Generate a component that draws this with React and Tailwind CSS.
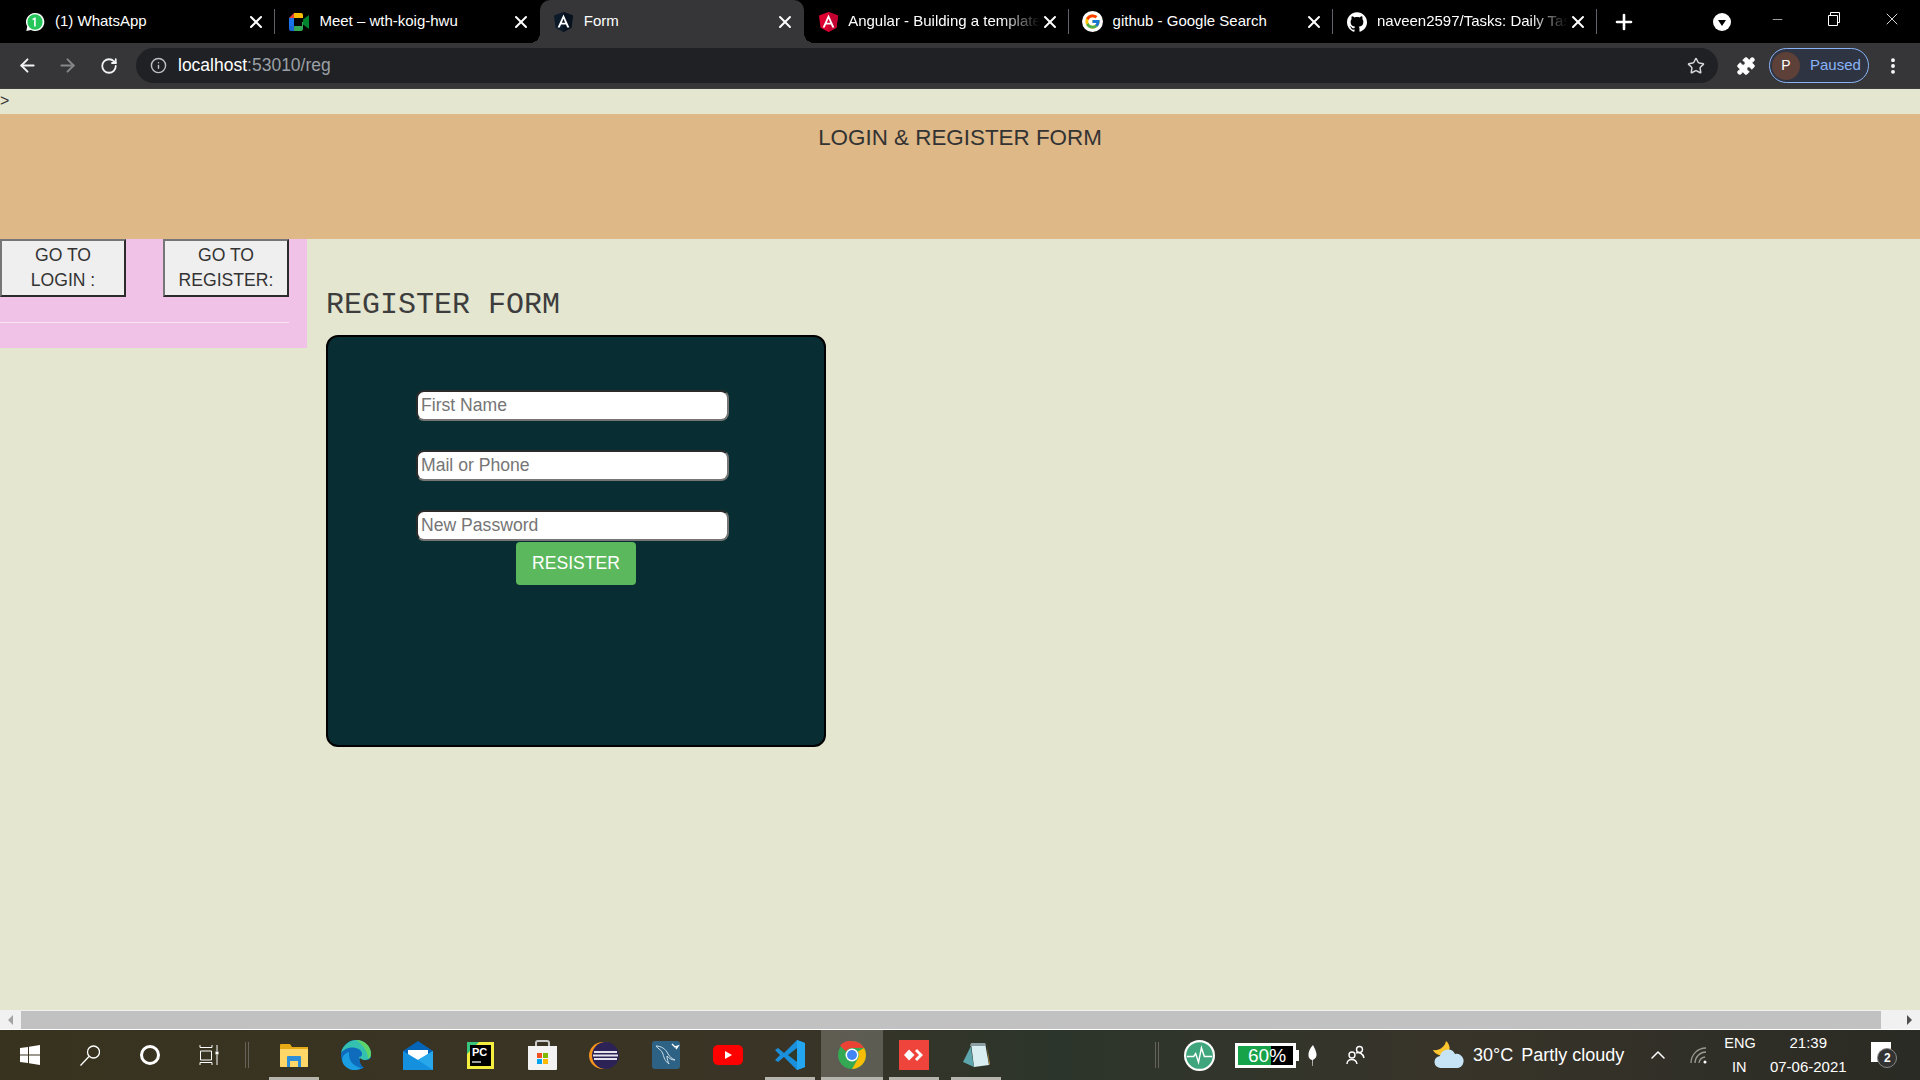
import React from "react";
import { ArrowLeft, ArrowRight, RotateCw, Info, Star, EllipsisVertical, X, Plus, Minus, ChevronUp, Puzzle } from "lucide-react";
import { SiGithub } from "react-icons/si";
import { FcGoogle } from "react-icons/fc";

const WhatsappIcon = () => (
  <svg width="22" height="22" viewBox="0 0 22 22">
    <path d="M11 1a10 10 0 0 0-8.600 15L1.500 21l5-1.200A10 10 0 1 0 11 1z" fill="#fff" />
    <circle cx="11" cy="11" r="8.400" fill="#25c65a" />
    <path d="M11.800 6v10h-1.800V8.200L8.300 9V7.400L10.700 6z" fill="#fff" />
  </svg>
);

const MeetIcon = () => (
  <svg width="20" height="18" viewBox="0 0 20 18">
    <path d="M5 0v5H0z" fill="#ea4335" />
    <path d="M5 0h7a2 2 0 0 1 2 2v3H5z" fill="#fbbc04" />
    <path d="M0 5h5v8H0z" fill="#1a73e8" />
    <path d="M0 13h5v5H2a2 2 0 0 1-2-2z" fill="#1967d2" />
    <path d="M5 13h9v3a2 2 0 0 1-2 2H5z" fill="#34a853" />
    <path d="M14 9v5l-1 0V9z" fill="#34a853" />
    <path d="M14 6.500v5l6 4.500V2z" fill="#00832d" />
  </svg>
);

const AngularIcon = ({ bg, shade, fg }) => (
  <svg width="19" height="20" viewBox="0 0 19 20">
    <path d="M9.500 0 0 3.400l1.500 12.400L9.500 20l8-4.200L19 3.400z" fill={bg} />
    <path d="M9.500 0v20l8-4.200L19 3.400z" fill={shade} />
    <path d="M9.500 2.400 3.600 15.600h2.200l1.200-3h5l1.200 3h2.200zm-1.700 8.400 1.700-4.100 1.700 4.100z" fill={fg} />
  </svg>
);

const tabs = [
  { title: "(1) WhatsApp", icon: <WhatsappIcon /> },
  { title: "Meet – wth-koig-hwu", icon: <MeetIcon /> },
  { title: "Form", icon: <AngularIcon bg="#0c1a2a" shade="#08121e" fg="#fff" />, active: true },
  { title: "Angular - Building a template", icon: <AngularIcon bg="#dd0031" shade="#c3002f" fg="#fff" />, fade: true },
  { title: "github - Google Search", icon: <span className="flex h-[21px] w-[21px] shrink-0 items-center justify-center rounded-full bg-white"><FcGoogle size={17} /></span> },
  { title: "naveen2597/Tasks: Daily Tasks", icon: <SiGithub size={20} color="#fff" />, fade: true },
];

const BrowserTab = ({ tab, hideSep }) => (
  <div className={`relative flex h-[43px] w-[264.4px] shrink-0 items-center pl-[14px] pr-[9px] ${tab.active ? "rounded-t-[10px] bg-[#363638]" : ""}`}>
    {tab.active && (
      <>
        <span className="absolute bottom-0 left-[-10px] h-[10px] w-[10px] bg-[radial-gradient(circle_at_0_0,transparent_10px,#363638_10px)]" />
        <span className="absolute bottom-0 right-[-10px] h-[10px] w-[10px] bg-[radial-gradient(circle_at_100%_0,transparent_10px,#363638_10px)]" />
      </>
    )}
    <span className="flex w-[20px] shrink-0 items-center justify-center">{tab.icon}</span>
    <span className={`ml-[10px] min-w-0 flex-1 overflow-hidden whitespace-nowrap text-[15px] text-white ${tab.fade ? "[mask-image:linear-gradient(to_right,black_80%,transparent)]" : ""}`}>
      {tab.title}
    </span>
    <X size={20} strokeWidth={2.4} className="shrink-0 text-white" />
    {!tab.active && !hideSep && <span className="absolute right-0 top-[9px] h-[25px] w-px bg-[#5f6368]" />}
  </div>
);

const TitleBar = () => (
  <div className="flex h-[43px] shrink-0 items-center bg-black pl-[11px]">
    {tabs.map((tab, i) => (
      <BrowserTab key={i} tab={tab} hideSep={i === 1} />
    ))}
    <Plus size={24} strokeWidth={2.6} className="ml-[15px] text-white" />
    <span className="ml-[77px] flex h-[18px] w-[18px] items-center justify-center rounded-full bg-white">
      <span className="mt-[3px] border-x-[4px] border-t-[6px] border-x-transparent border-t-black" />
    </span>
    <Minus size={15} strokeWidth={1} className="ml-[39px] -mt-[5px] text-white" />
    <svg width="14" height="14" viewBox="0 0 14 14" fill="none" stroke="#fff" className="ml-[42px] -mt-[5px]">
      <path d="M1.500 3.500h9v10h-9zM3.500 3.500v-3h9v10h-2" />
    </svg>
    <X size={20} strokeWidth={1} className="ml-[41px] -mt-[5px] text-white" />
  </div>
);

const Toolbar = () => (
  <div className="flex h-[46px] shrink-0 items-center border-b border-[#3c3d41] bg-[#363638]">
    <ArrowLeft size={21} strokeWidth={2.2} className="ml-[17px] text-[#f1f3f4]" />
    <ArrowRight size={21} strokeWidth={2.2} className="ml-[19px] text-[#85878a]" />
    <RotateCw size={18} strokeWidth={2.4} className="ml-[22px] text-[#f1f3f4]" />
    <div className="ml-[18px] flex h-[35px] w-[1582px] items-center rounded-full bg-[#202124] pl-[14px]">
      <Info size={17} className="text-[#bdc1c6]" />
      <span className="ml-[11px] text-[17.5px] text-white">localhost<span className="text-[#9aa0a6]">:53010/reg</span></span>
      <Star size={18} strokeWidth={2} className="ml-auto mr-[13px] text-[#d5d7da]" />
    </div>
    <Puzzle size={20} fill="#fff" strokeWidth={1} className="ml-[18px] text-white" />
    <div className="ml-[13px] flex h-[35px] w-[100px] items-center rounded-full border border-[#8ab4f8] bg-[#2f3442] pl-[2px]">
      <span className="flex h-[28px] w-[28px] items-center justify-center rounded-full bg-[#5d4037] text-[14px] text-white">P</span>
      <span className="ml-[10px] text-[15px] text-[#8ab4f8]">Paused</span>
    </div>
    <EllipsisVertical size={20} strokeWidth={2.6} className="ml-[14px] text-white" />
  </div>
);

const NavButton = ({ children }) => (
  <button className="h-[58px] w-[126px] border-2 border-b-[#2b2b2b] border-l-[#767676] border-r-[#2b2b2b] border-t-[#767676] bg-[#efefef] text-[17.6px] leading-[25px] text-[#333]">
    {children}
  </button>
);

const Field = ({ placeholder, className }) => (
  <input
    placeholder={placeholder}
    className={`block h-[31px] w-[313px] rounded-[8px] border-2 border-b-[#767676] border-l-[#2b2b2b] border-r-[#767676] border-t-[#2b2b2b] bg-white pl-[3px] text-[17.6px] placeholder:text-[#757575] ${className}`}
  />
);

const Page = () => (
  <div className="min-h-0 flex-1 overflow-hidden bg-[#e4e6d0] text-[#333]">
    <div className="h-[25px] text-[16px] leading-[24px]">&gt;</div>
    <header className="h-[125px] bg-[#deb887] pt-[10px] text-center text-[22.4px] leading-[28px]">LOGIN &amp; REGISTER FORM</header>
    <div className="flex items-start">
      <aside className="h-[109px] w-[307px] shrink-0 bg-[#f0c2e7]">
        <div className="flex w-[289px] justify-between">
          <NavButton>GO TO<br />LOGIN :</NavButton>
          <NavButton>GO TO<br />REGISTER:</NavButton>
        </div>
        <hr className="mt-[25px] w-[289px] border-t border-[#f8e6f5]" />
      </aside>
      <main className="ml-[19px] pt-[48px]">
        <h2 className="h-[48px] font-['Liberation_Mono',monospace] text-[30px] font-normal leading-[36px] text-[#3d3d3d]">REGISTER FORM</h2>
        <div className="h-[412px] w-[500px] rounded-[12px] border-2 border-black bg-[#082e33] pt-[53px]">
          <div className="ml-[88px]">
            <Field placeholder="First Name" />
            <Field placeholder="Mail or Phone" className="mt-[29px]" />
            <Field placeholder="New Password" className="mt-[29px]" />
          </div>
          <button className="ml-[188px] mt-px block h-[43px] w-[120px] rounded-[4px] bg-[#5cb85c] text-[17.6px] text-white">RESISTER</button>
        </div>
      </main>
    </div>
  </div>
);

const ScrollBar = () => (
  <div className="flex h-[20px] shrink-0 items-center border-b border-white bg-[#f1f1f1]">
    <span className="ml-[8px] mr-[8px] border-y-[5px] border-r-[5px] border-y-transparent border-r-[#a3a3a3]" />
    <div className="h-[18px] w-[1860px] bg-[#c1c1c1]" />
    <span className="ml-[26px] border-y-[5px] border-l-[5px] border-y-transparent border-l-[#505050]" />
  </div>
);

const TaskIcon = ({ children, underline, active }) => (
  <div className={`relative flex h-[50px] w-[62px] items-center justify-center ${active ? "bg-white/20" : ""}`}>
    {children}
    {underline && <span className={`absolute bottom-0 h-[3px] bg-[#b5b5ad] ${active ? "left-0 right-0" : "left-[6px] right-[6px]"}`} />}
  </div>
);

const apps = [
  {
    key: "explorer",
    underline: true,
    svg: (
      <svg width="28" height="23" viewBox="0 0 28 23">
        <path d="M0 1a1 1 0 0 1 1-1h9l2 3h16v20H0z" fill="#e8a917" />
        <path d="M0 5h28v17a1 1 0 0 1-1 1H1a1 1 0 0 1-1-1z" fill="#ffd768" />
        <path d="M7 23v-10a1 1 0 0 1 1-1h12a1 1 0 0 1 1 1v10h-3v-6h-8v6z" fill="#2c8ed6" />
      </svg>
    ),
  },
  {
    key: "edge",
    svg: (
      <svg width="30" height="30" viewBox="0 0 30 30">
        <circle cx="15" cy="15" r="15" fill="#0f6cbd" />
        <path d="M0 13C2 4 10 0 15 0c8 0 15 6 15 14 0 4-3 6-7 6-3 0-5-1-5-3 3 0 4-3 2-6-3-4-14-6-20 2z" fill="#35c1b0" />
        <path d="M15 0c8 0 15 6 15 14 0 2-1 4-3 5 0-6-4-14-12-19z" fill="#5fd468" />
        <path d="M8 15c0 7 6 12 13 13-7 4-14 2-18-3-4-6-1-11 5-13z" fill="#1b9de2" />
        <path d="M30 18c-3 3-8 3-11 0-1 4 1 8 5 10l6 1z" fill="#3a3425" />
      </svg>
    ),
  },
  {
    key: "mail",
    svg: (
      <svg width="30" height="29" viewBox="0 0 30 29">
        <path d="M0 10 15 0l15 10v19H0z" fill="#0364b8" />
        <path d="M5 9h20v7l-10 6-10-6z" fill="#fff" />
        <path d="M0 10l15 9 15-9v19H0z" fill="#1490df" />
        <path d="M15 19l15-9v19z" fill="#28a8ea" />
      </svg>
    ),
  },
  {
    key: "pycharm",
    svg: (
      <svg width="27" height="27" viewBox="0 0 27 27">
        <path d="M0 0h27v27H0z" fill="#f4ee3f" />
        <path d="M0 0h12L0 12z" fill="#3bc47d" />
        <path d="M3 3h21v21H3z" fill="#000" />
        <text x="5" y="14" fill="#fff" fontSize="11" fontWeight="700" fontFamily="Liberation Sans">PC</text>
        <path d="M5 19h9v2H5z" fill="#9a9a9a" />
      </svg>
    ),
  },
  {
    key: "store",
    svg: (
      <svg width="29" height="30" viewBox="0 0 29 30">
        <path d="M8 8V3a2 2 0 0 1 2-2h9a2 2 0 0 1 2 2v5" fill="none" stroke="#c9c9c9" strokeWidth="2" />
        <path d="M0 6h29v23a1 1 0 0 1-1 1H1a1 1 0 0 1-1-1z" fill="#f3f3f3" />
        <path d="M9 13h5v5H9z" fill="#f25022" />
        <path d="M15 13h5v5h-5z" fill="#7fba00" />
        <path d="M9 19h5v5H9z" fill="#00a4ef" />
        <path d="M15 19h5v5h-5z" fill="#ffb900" />
      </svg>
    ),
  },
  {
    key: "eclipse",
    svg: (
      <svg width="30" height="27" viewBox="0 0 30 27">
        <ellipse cx="14" cy="13.500" rx="14" ry="13.500" fill="#f7941e" />
        <circle cx="16.500" cy="13.500" r="13.500" fill="#2c2255" />
        <path d="M5 9h23v2H5zM4 12.500h25v2H4zM5 16h23v2H5z" fill="#e6e3ef" />
      </svg>
    ),
  },
  {
    key: "mysql",
    svg: (
      <svg width="28" height="28" viewBox="0 0 28 28">
        <rect width="28" height="28" rx="3" fill="#2d6285" />
        <path d="M4 5c5 0 10 3 12 8 2 3 4 5 7 6-4 0-6-2-8-4 0 3 1 6 2 8-4-3-5-6-6-10-1-4-5-5-7-8z" fill="none" stroke="#cfe0ea" strokeWidth="1" />
        <path d="M20 3l3 3 3-1-2 3" fill="none" stroke="#fff" strokeWidth="1.400" />
      </svg>
    ),
  },
  {
    key: "youtube",
    svg: (
      <svg width="30" height="20" viewBox="0 0 30 20">
        <rect width="30" height="20" rx="5" fill="#f00" />
        <path d="M12 6v8l7-4z" fill="#fff" />
      </svg>
    ),
  },
  {
    key: "vscode",
    underline: true,
    svg: (
      <svg width="30" height="30" viewBox="0 0 30 30">
        <path d="M22 0 9 13 3 8 0 10l5 5-5 5 3 2 6-5 13 13 8-3V3z" fill="#1a8fdc" />
        <path d="M22 8v14l-9-7z" fill="#2f3a2a" />
        <path d="M22 0l8 3v24l-8 3z" fill="#24a5f0" />
      </svg>
    ),
  },
  {
    key: "chrome",
    underline: true,
    active: true,
    svg: (
      <svg width="28" height="28" viewBox="0 0 28 28">
        <circle cx="14" cy="14" r="14" fill="#34a853" />
        <path d="M14 0a14 14 0 0 1 12.100 7H14a7 7 0 0 0-6.100 3.500L2 4.600A14 14 0 0 1 14 0z" fill="#ea4335" />
        <path d="M26.100 7A14 14 0 0 1 14 28l6-10.500A7 7 0 0 0 20 10.500z" fill="#fbbc04" />
        <circle cx="14" cy="14" r="6.500" fill="#fff" />
        <circle cx="14" cy="14" r="5" fill="#4285f4" />
      </svg>
    ),
  },
  {
    key: "anydesk",
    underline: true,
    svg: (
      <svg width="30" height="30" viewBox="0 0 30 30">
        <path d="M0 0h30v30H0z" fill="#ef443b" />
        <path d="m10 9.500 5.500 5.500-5.500 5.500L5 15z" fill="#fff" />
        <path d="m18 9 6 6-6 6-2-2 4-4-4-4z" fill="#fff" />
      </svg>
    ),
  },
  {
    key: "notes",
    underline: true,
    svg: (
      <svg width="28" height="26" viewBox="0 0 28 26">
        <path d="M9 1h14l4 22-15 2z" fill="#d9eef0" />
        <path d="M9 1h14l1 3H8z" fill="#8a9ea3" />
        <path d="M9 4 1 20l11 5-2-12z" fill="#5ea6ad" />
        <path d="M25 4l3 18-1 1z" fill="#a8873d" />
      </svg>
    ),
  },
];

const Taskbar = () => (
  <div className="flex h-[50px] shrink-0 items-center bg-[linear-gradient(90deg,#38331f,#3a3426_40%,#2c352b_55%,#38342a_75%,#2a2b24)] text-white">
    <div className="flex w-[60px] justify-center">
      <svg width="20" height="20" viewBox="0 0 20 20" fill="#fff">
        <path d="M0 3l8-1v7.500H0zM9 1.800 20 0v9.500H9zM0 10.500h8V18l-8-1zM9 10.500h11V20L9 18.200z" />
      </svg>
    </div>
    <div className="flex w-[60px] justify-center">
      <svg width="20" height="21" viewBox="0 0 20 21" fill="none" stroke="#fff" strokeWidth="1.300">
        <circle cx="13.500" cy="7" r="6" />
        <path d="M9 11.500 0.500 20.500" />
      </svg>
    </div>
    <div className="flex w-[60px] justify-center">
      <span className="h-[20px] w-[20px] rounded-full border-[3px] border-white" />
    </div>
    <div className="flex w-[58px] justify-center">
      <svg width="20" height="20" viewBox="0 0 20 20" fill="none" stroke="#fff">
        <path d="M1 0v2.500h12V0M1.500 6h11v9h-11zM1 20v-2.500h12V20M18 0v6M18 10v10" />
        <path d="M16.500 6.500h3v3h-3z" fill="#fff" stroke="none" />
      </svg>
    </div>
    <span className="ml-[7px] h-[26px] w-[4px] border-x border-[#66645a]" />
    <div className="ml-[14px] flex">
      {apps.map((app) => (
        <TaskIcon key={app.key} underline={app.underline} active={app.active}>
          {app.svg}
        </TaskIcon>
      ))}
    </div>
    <span className="ml-[148px] h-[26px] w-[4px] border-x border-[#66645a]" />
    <svg width="31" height="31" viewBox="0 0 32 32" className="ml-[25px]">
      <circle cx="16" cy="16" r="16" fill="#fff" />
      <circle cx="16" cy="16" r="13.800" fill="#3fa57c" />
      <path d="M3 17h7l2-3 3 9 3-15 3 9h8" fill="none" stroke="#fff" strokeWidth="1.500" />
    </svg>
    <div className="ml-[20px] flex h-[25px] items-center">
      <div className="relative flex h-[25px] w-[61px] items-center border-[3px] border-white bg-black">
        <div className="h-full w-[60%] bg-[#16a34a]" />
        <span className="absolute left-[10px] top-0 text-[19px] leading-[19px]">60%</span>
      </div>
      <span className="h-[11px] w-[3px] bg-white" />
    </div>
    <svg width="9" height="21" viewBox="0 0 9 21" fill="#fff" className="ml-[9px]">
      <path d="M5 0C2 3 0 7 0.500 11c.2 2 1.500 3.500 3.500 4l.5 6h.5l-.3-6C7 14 9 12 8.500 9 8.200 6 6.500 3 5 0z" />
    </svg>
    <svg width="20" height="20" viewBox="0 0 20 20" fill="none" stroke="#fff" strokeWidth="1.400" className="ml-[29px]">
      <circle cx="13.500" cy="4.500" r="3" />
      <circle cx="6" cy="10" r="3" />
      <path d="M1 19c0-6 9-6 10 0M10 8c3-1 7 0 8 5" />
    </svg>
    <svg width="32" height="28" viewBox="0 0 32 28" className="ml-[67px]">
      <path d="M13 0a9 9 0 0 1-1 15C7 15 2 13 0 9c6 1 12-3 13-9z" fill="#fdc62f" />
      <path d="M8 27a6 6 0 0 1-1-12 8 8 0 0 1 15-2 7 7 0 0 1 3 14z" fill="#c6e4f6" />
    </svg>
    <span className="ml-[8px] text-[18px]">30°C</span>
    <span className="ml-[8px] whitespace-nowrap text-[18px]">Partly cloudy</span>
    <ChevronUp size={24} strokeWidth={1.5} className="ml-[22px]" />
    <svg width="18" height="20" viewBox="0 0 18 20" fill="none" stroke="#9a9a94" strokeWidth="1.300" className="ml-[20px]">
      <path d="M1 18a15 15 0 0 1 15-15M5 18a11 11 0 0 1 11-11M9 18a7 7 0 0 1 6-6" />
      <circle cx="15" cy="17" r="1.500" fill="#fff" stroke="none" />
    </svg>
    <div className="ml-[16px] w-[30px] text-center text-[14.5px] leading-[24px]">ENG<br />IN</div>
    <div className="ml-[15px] w-[78px] text-center text-[15px] leading-[24px]">21:39<br />07-06-2021</div>
    <div className="relative ml-[24px] h-[26px] w-[26px]">
      <div className="h-[20px] w-[20px] bg-white" />
      <span className="absolute bottom-0 right-0 flex h-[20px] w-[20px] items-center justify-center rounded-full border border-[#888] bg-[#333] text-[12px] font-bold">2</span>
    </div>
  </div>
);

export default function App() {
  return (
    <div className="flex h-screen w-[1920px] flex-col overflow-hidden font-['Liberation_Sans',sans-serif]">
      <TitleBar />
      <Toolbar />
      <Page />
      <ScrollBar />
      <Taskbar />
    </div>
  );
}
